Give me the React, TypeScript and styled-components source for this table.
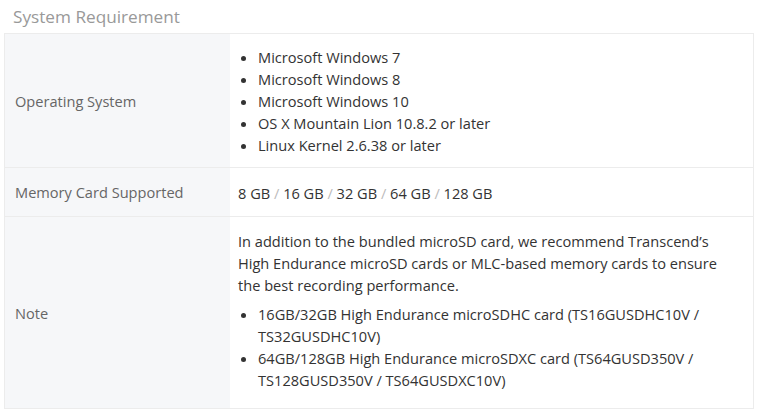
import React from "react";
import styled, { createGlobalStyle } from "styled-components";

const Global = createGlobalStyle`
  html, body { margin: 0; padding: 0; background: #fff; }
  body { font-family: "Open Sans", "Liberation Sans", sans-serif; }
`;

const Page = styled.div`
  width: 762px;
  height: 420px;
  padding: 5px 8px 0 4px;
  box-sizing: border-box;
`;

const Title = styled.h2`
  margin: 0 0 4px 9px;
  font-size: 17.2px;
  font-weight: 400;
  line-height: 24px;
  color: #999;
`;

const Table = styled.div`
  display: grid;
  grid-template-columns: 225px 1fr;
  border: 1px solid #ececec;
`;

const Label = styled.div<{ $last?: boolean }>`
  background: #f6f7f9;
  color: #666;
  font-size: 14.6px;
  line-height: 22px;
  padding: 0 10px;
  display: flex;
  align-items: center;
  border-bottom: ${(p) => (p.$last ? "none" : "1px solid #ececec")};
`;

const Value = styled.div<{ $pt: number; $pb: number; $last?: boolean }>`
  color: #333;
  font-size: 14.6px;
  line-height: 22px;
  padding: ${(p) => p.$pt}px 12px ${(p) => p.$pb}px 8px;
  border-bottom: ${(p) => (p.$last ? "none" : "1px solid #ececec")};
`;

const List = styled.ul`
  margin: 0;
  padding: 0 0 0 20px;
`;

const Para = styled.p`
  margin: 0 0 7px;
`;

const Sep = styled.span`
  color: #bbb;
`;

export default function App() {
  const sizes = ["8 GB", "16 GB", "32 GB", "64 GB", "128 GB"];
  return (
    <>
      <Global />
      <Page>
        <Title>System Requirement</Title>
        <Table>
          <Label>Operating System</Label>
          <Value $pt={12} $pb={11}>
            <List>
              <li>Microsoft Windows 7</li>
              <li>Microsoft Windows 8</li>
              <li>Microsoft Windows 10</li>
              <li>OS X Mountain Lion 10.8.2 or later</li>
              <li>Linux Kernel 2.6.38 or later</li>
            </List>
          </Value>
          <Label>Memory Card Supported</Label>
          <Value $pt={14} $pb={12}>
            {sizes.map((s, i) => (
              <React.Fragment key={s}>
                {i > 0 && <Sep> / </Sep>}
                {s}
              </React.Fragment>
            ))}
          </Value>
          <Label $last>Note</Label>
          <Value $pt={13} $pb={17} $last>
            <Para>
              In addition to the bundled microSD card, we recommend Transcend’s
              High Endurance microSD cards or MLC-based memory cards to ensure
              the best recording performance.
            </Para>
            <List>
              <li>
                16GB/32GB High Endurance microSDHC card (TS16GUSDHC10V /
                TS32GUSDHC10V)
              </li>
              <li>
                64GB/128GB High Endurance microSDXC card (TS64GUSD350V /
                TS128GUSD350V / TS64GUSDXC10V)
              </li>
            </List>
          </Value>
        </Table>
      </Page>
    </>
  );
}
